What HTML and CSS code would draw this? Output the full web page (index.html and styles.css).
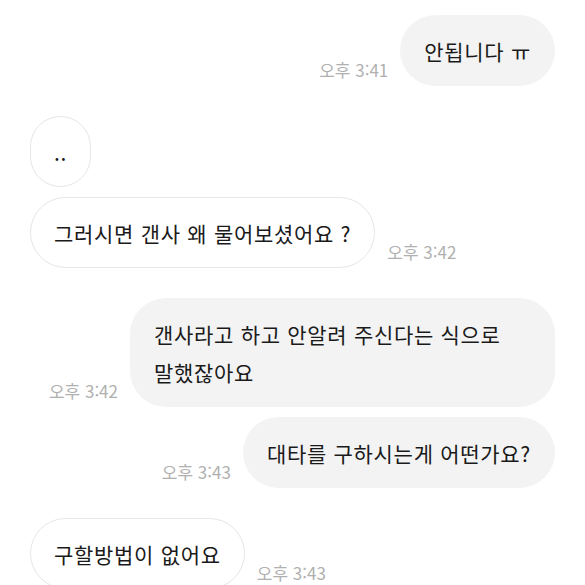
FILE: index.html
```html
<!DOCTYPE html>
<html lang="ko">
<head>
    <meta charset="UTF-8">
    <meta name="viewport" content="width=device-width, initial-scale=1.0">
    <title>채팅</title>
    <link rel="stylesheet" href="styles.css">
</head>
<body>

    <div class="chat">
        <div class="row sent">
            <span class="time">오후 3:41</span>
            <div class="bubble">안됩니다 ㅠ</div>
        </div>

        <div class="row received first">
            <div class="bubble">..</div>
        </div>
        <div class="row received">
            <div class="bubble">그러시면 갠사 왜 물어보셨어요 ?</div>
            <span class="time">오후 3:42</span>
        </div>

        <div class="row sent first">
            <span class="time">오후 3:42</span>
            <div class="bubble">갠사라고 하고 안알려 주신다는 식으로 말했잖아요</div>
        </div>
        <div class="row sent">
            <span class="time">오후 3:43</span>
            <div class="bubble">대타를 구하시는게 어떤가요?</div>
        </div>

        <div class="row received first">
            <div class="bubble">구할방법이 없어요</div>
            <span class="time">오후 3:43</span>
        </div>
    </div>

</body>
</html>
```

FILE: styles.css
```css
body {
    margin: 0;
    padding: 0;
    background: #fff;
    font-family: "Noto Sans CJK KR", "Noto Sans", sans-serif;
    color: #1a1a1a;
}

.chat {
    padding: 15px 30px 0;
    display: flex;
    flex-direction: column;
    gap: 10px;
}

.row {
    display: flex;
    align-items: flex-end;
    gap: 12px;
}

.row.first {
    margin-top: 20px;
}

.row.sent {
    justify-content: flex-end;
}

.bubble {
    box-sizing: border-box;
    max-width: 425px;
    padding: 16.5px 24px;
    border-radius: 36px;
    font-size: 21px;
    letter-spacing: 0.7px;
    line-height: 38px;
    word-break: keep-all;
}

.sent .bubble {
    background: #f3f3f3;
}

.received .bubble {
    background: #fff;
    border: 1px solid #e6e6e6;
    padding: 15.5px 23px;
}

.time {
    flex-shrink: 0;
    font-size: 17px;
    line-height: 20px;
    color: #b0b0b0;
    margin-bottom: 6px;
}
```
